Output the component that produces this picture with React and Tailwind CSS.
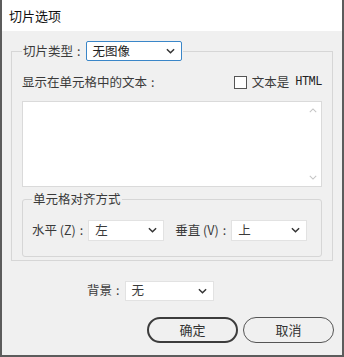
import React from "react";

const Chevron = ({ className = "" }) => (
    <svg viewBox="0 0 10 6" className={`w-[9px] h-[6px] ${className}`} fill="none" stroke="#333" strokeWidth="1.6">
        <polyline points="1,1 5,5 9,1" />
    </svg>
);

const Select = ({ value, className = "" }) => (
    <div className={`flex items-center justify-between bg-white border px-[6px] ${className}`}>
        <span>{value}</span>
        <Chevron />
    </div>
);

const Colon = () => <span className="ml-[4px] mr-[5px]">:</span>;

const App = () => {
    return (
        <div className="w-[344px] h-[357px] bg-[#f0f0f0] border-x-2 border-b-2 border-[#5c5c5c] flex flex-col text-[12.5px] text-[#3a3a3a] font-['Noto_Sans_CJK_SC',sans-serif] leading-none">
            <div className="h-[31px] shrink-0 bg-white flex items-center px-[7px] text-[13px] text-[#111]">
                切片选项
            </div>

            <div className="px-[9px] pt-[10px]">
                <fieldset className="border border-[#d6d6d6] px-[10px] pb-[3px]">
                    <legend className="px-[1px]">
                        <div className="flex items-center">
                            <span>切片类型</span>
                            <Colon />
                            <Select value="无图像" className="w-[96px] h-[20px] border-[#3a86c8] rounded-[2px] text-[#222]" />
                        </div>
                    </legend>

                    <div className="flex items-center justify-between mt-[14px] h-[14px]">
                        <span className="flex items-center">显示在单元格中的文本<Colon /></span>
                        <div className="flex items-center">
                            <div className="w-[13px] h-[13px] border border-[#555] bg-white mr-[5px]" />
                            <span>文本是</span>
                            <span className="ml-[6px] font-['Liberation_Mono',monospace] text-[12px] tracking-[-0.5px] text-[#222]">HTML</span>
                        </div>
                    </div>

                    <div className="mt-[12px] h-[86px] bg-white border border-[#dadada] flex justify-end">
                        <div className="w-[17px] flex flex-col items-center justify-between py-[6px]">
                            <svg viewBox="0 0 10 6" className="w-[8px] h-[5px]" fill="none" stroke="#c4c4c4" strokeWidth="1.3">
                                <polyline points="1,5 5,1 9,5" />
                            </svg>
                            <svg viewBox="0 0 10 6" className="w-[8px] h-[5px]" fill="none" stroke="#c4c4c4" strokeWidth="1.3">
                                <polyline points="1,1 5,5 9,1" />
                            </svg>
                        </div>
                    </div>

                    <fieldset className="mt-[6px] border border-[#d6d6d6] rounded-[3px] px-[9px] pt-[14px] pb-[15px]">
                        <legend className="px-[1px]">单元格对齐方式</legend>
                        <div className="flex items-center">
                            <span>水平 (Z)</span>
                            <Colon />
                            <Select value="左" className="w-[76px] h-[21px] border-[#e2e2e2]" />
                            <span className="ml-[11px]">垂直 (V)</span>
                            <Colon />
                            <Select value="上" className="w-[76px] h-[21px] border-[#e2e2e2]" />
                        </div>
                    </fieldset>
                </fieldset>
            </div>

            <div className="flex items-center mt-[20px] pl-[85px]">
                <span>背景</span>
                <Colon />
                <Select value="无" className="w-[89px] h-[20px] border-[#e2e2e2]" />
            </div>

            <div className="flex justify-end gap-[5px] mt-[16px] pr-[8px]">
                <button className="w-[91px] h-[26px] rounded-full border-2 border-[#3c3c3c] text-[13px] text-[#333]">
                    确定
                </button>
                <button className="w-[91px] h-[26px] rounded-full border-[1.5px] border-[#555] text-[13px] text-[#333]">
                    取消
                </button>
            </div>
        </div>
    );
};

export default App;
